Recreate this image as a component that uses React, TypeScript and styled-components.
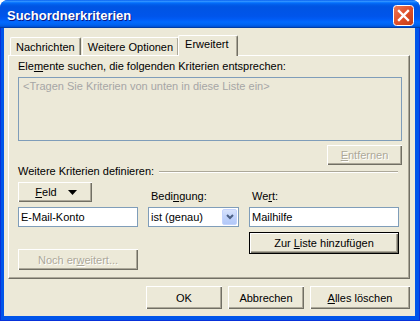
import styled, { createGlobalStyle } from "styled-components";

const GlobalStyle = createGlobalStyle`
  html, body {
    margin: 0;
    padding: 0;
    background: #ffffff;
  }
  body {
    font-family: "Liberation Sans", Arial, sans-serif;
    font-size: 11px;
    color: #000;
  }
`

const Window = styled.div`
  width: 420px;
  height: 321px;
  display: flex;
  flex-direction: column;
  border-radius: 8px 8px 0 0;
  overflow: hidden;
  background: #0055ea;
`

const TitleBar = styled.div`
  height: 29px;
  flex: none;
  display: flex;
  align-items: center;
  justify-content: space-between;
  padding: 0 7px 0 7px;
  box-sizing: border-box;
  background: linear-gradient(180deg, #0058ee 0%, #3593ff 4%, #288eff 6%, #127dff 8%, #036ffc 10%, #0262ee 14%, #0057e5 20%, #0054e3 24%, #0055eb 56%, #005bf5 66%, #026afe 76%, #0062ef 86%, #0052d6 92%, #0040ab 94%, #003092 100%);
`

const Title = styled.span`
  color: #fff;
  font-weight: 700;
  font-size: 13px;
  padding-top: 1px;
  text-shadow: 1px 1px #0a1883;
`

const CloseBox = styled.div`
  width: 21px;
  height: 21px;
  margin-top: 1px;
  margin-right: -1px;
`

const Frame = styled.div`
  flex: 1;
  display: flex;
  padding: 0 5px 4px 4px;
  background: #0055ea;
  border-left: 1px solid #0831d9;
  border-right: 1px solid #0831d9;
  border-bottom: 1px solid #0831d9;
  margin-top: -1px;
`

const Client = styled.div`
  flex: 1;
  background: #ece9d8;
  display: flex;
  flex-direction: column;
  padding: 7px 5px 0 4px;
  margin-left: -1px;
  margin-right: -1px;
`

const TabStrip = styled.div`
  height: 20px;
  display: flex;
  align-items: flex-end;
  padding-left: 2px;
`

const Tab = styled.div<{ $active?: boolean }>`
  box-sizing: border-box;
  height: ${p => (p.$active ? 21 : 18)}px;
  line-height: ${p => (p.$active ? 16 : 18)}px;
  padding: 0 ${p => (p.$active ? 8 : 5)}px 0 ${p => (p.$active ? 6 : 5)}px;
  margin-left: ${p => (p.$active ? -1 : 1)}px;
  margin-bottom: ${p => (p.$active ? -1 : 0)}px;
  border-top: 1px solid #fff;
  border-left: 1px solid #fff;
  border-right: 1px solid #716f64;
  border-radius: 2px 2px 0 0;
  box-shadow: inset -1px 0 #aca899;
  background: #ece9d8;
  position: relative;
  z-index: ${p => (p.$active ? 1 : 0)};
  &:first-child {
    margin-left: 0;
  }
`

const Panel = styled.div`
  box-sizing: border-box;
  height: 224px;
  display: flex;
  flex-direction: column;
  padding: 4px 5px 0 9px;
  border-top: 1px solid #fff;
  border-left: 1px solid #fff;
  border-right: 1px solid #716f64;
  border-bottom: 1px solid #716f64;
  box-shadow: inset -1px -1px #aca899;
`

const Label = styled.div`
  line-height: 13px;
  height: 13px;
  white-space: nowrap;
`

const Key = styled.span`
  text-decoration: underline;
  text-underline-offset: 1px;
`

const ListBox = styled.div`
  box-sizing: border-box;
  margin-top: 4px;
  width: 384px;
  height: 64px;
  border: 1px solid #7f9db9;
  padding: 2px 4px;
  line-height: 13px;
  color: #a6a6a6;
`

const RightRow = styled.div`
  display: flex;
  justify-content: flex-end;
  width: 384px;
  margin-top: 4px;
`

const Button = styled.div<{ $w: number; $h?: number; $default?: boolean; $disabled?: boolean }>`
  box-sizing: border-box;
  width: ${p => p.$w}px;
  height: ${p => p.$h ?? 21}px;
  display: flex;
  align-items: center;
  justify-content: center;
  background: #ece9d8;
  border: ${p => (p.$default ? "1px solid #000" : "none")};
  box-shadow: inset 1px 1px #fff, inset -1px -1px #716f64, inset -2px -2px #aca899;
  color: ${p => (p.$disabled ? "#aca899" : "#000")};
  text-shadow: ${p => (p.$disabled ? "1px 1px #fff" : "none")};
  white-space: nowrap;
`

const MenuButton = styled(Button)`
  gap: 11px;
  padding-left: 2px;
`

const GroupHeader = styled.div`
  display: flex;
  align-items: center;
  height: 13px;
  line-height: 13px;
  width: 380px;
`

const Etched = styled.div`
  flex: 1;
  margin-left: 5px;
  margin-top: 1px;
  border-top: 1px solid #aca899;
  border-bottom: 1px solid #fff;
`

const Criteria = styled.div`
  display: grid;
  grid-template-columns: 120px 91px 150px;
  column-gap: 10px;
  margin-top: 4px;
  align-items: start;
`

const Column = styled.div`
  display: flex;
  flex-direction: column;
`

const FieldLabel = styled.div`
  height: 25px;
  display: flex;
  align-items: flex-end;
  padding: 0 0 4px 3px;
  box-sizing: border-box;
  line-height: 13px;
`

const TextBox = styled.div<{ $mt?: number }>`
  box-sizing: border-box;
  height: 20px;
  margin-top: ${p => p.$mt ?? 0}px;
  border: 1px solid #7f9db9;
  background: #fff;
  display: flex;
  align-items: center;
  padding-left: 2px;
  line-height: 13px;
`

const Combo = styled(TextBox)`
  justify-content: space-between;
  padding-right: 1px;
`

const DropButton = styled.div`
  width: 15px;
  height: 16px;
  border-radius: 2px;
  background: linear-gradient(180deg, #d8e3fc 0%, #c1d3fb 50%, #b2c8f8 100%);
  border: 1px solid #c3d3fd;
  box-sizing: border-box;
  display: flex;
  align-items: center;
  justify-content: center;
`

const Spacer = styled.div<{ $h: number }>`
  height: ${p => p.$h}px;
`

const ButtonRow = styled.div`
  display: flex;
  justify-content: flex-end;
  gap: 6px;
  margin-top: 7px;
  padding-right: 0;
`

function CloseIcon() {
  return (
    <svg width="21" height="21" viewBox="0 0 21 21">
      <defs>
        <linearGradient id="cg" x1="0" y1="0" x2="1" y2="1">
          <stop offset="0" stopColor="#ec7a5a" />
          <stop offset="0.5" stopColor="#e0502a" />
          <stop offset="1" stopColor="#c13a14" />
        </linearGradient>
      </defs>
      <rect x="0.5" y="0.5" width="20" height="20" rx="3" fill="url(#cg)" stroke="#fff" />
      <path d="M6 6 L15 15 M15 6 L6 15" stroke="#fff" strokeWidth="2.4" strokeLinecap="square" />
    </svg>
  )
}

function DownTriangle() {
  return (
    <svg width="9" height="5" viewBox="0 0 9 5">
      <path d="M0 0 H9 L4.5 5 Z" fill="#000" />
    </svg>
  )
}

function Chevron() {
  return (
    <svg width="8" height="6" viewBox="0 0 8 6">
      <path d="M1 1 L4 4 L7 1" stroke="#4d6185" strokeWidth="2" fill="none" />
    </svg>
  )
}

export default function App() {
  return (
    <>
      <GlobalStyle />
      <Window>
        <TitleBar>
          <Title>Suchordnerkriterien</Title>
          <CloseBox><CloseIcon /></CloseBox>
        </TitleBar>
        <Frame>
          <Client>
            <TabStrip>
              <Tab>Nachrichten</Tab>
              <Tab>Weitere Optionen</Tab>
              <Tab $active>Erweitert</Tab>
            </TabStrip>
            <Panel>
              <Label>Ele<Key>m</Key>ente suchen, die folgenden Kriterien entsprechen:</Label>
              <ListBox>&lt;Tragen Sie Kriterien von unten in diese Liste ein&gt;</ListBox>
              <RightRow>
                <Button $w={75} $h={20} $disabled><span><Key>E</Key>ntfernen</span></Button>
              </RightRow>
              <GroupHeader>
                <span>Weitere Kriterien definieren:</span>
                <Etched />
              </GroupHeader>
              <Criteria>
                <Column>
                  <MenuButton $w={74} $h={20}>
                    <span><Key>F</Key>eld</span>
                    <DownTriangle />
                  </MenuButton>
                  <TextBox $mt={5}>E-Mail-Konto</TextBox>
                  <Spacer $h={22} />
                  <Button $w={120} $h={21} $disabled><span>Noch er<Key>w</Key>eitert...</span></Button>
                </Column>
                <Column>
                  <FieldLabel><span>Bedi<Key>n</Key>gung:</span></FieldLabel>
                  <Combo>
                    <span>ist (genau)</span>
                    <DropButton><Chevron /></DropButton>
                  </Combo>
                </Column>
                <Column>
                  <FieldLabel><span>We<Key>r</Key>t:</span></FieldLabel>
                  <TextBox>Mailhilfe</TextBox>
                  <Spacer $h={5} />
                  <Button $w={150} $h={22} $default><span>Zur <Key>L</Key>iste hinzufügen</span></Button>
                </Column>
              </Criteria>
            </Panel>
            <ButtonRow>
              <Button $w={76} $h={23}><span>OK</span></Button>
              <Button $w={76} $h={23}><span>Abbrechen</span></Button>
              <Button $w={100} $h={23}><span><Key>A</Key>lles löschen</span></Button>
            </ButtonRow>
          </Client>
        </Frame>
      </Window>
    </>
  )
}
